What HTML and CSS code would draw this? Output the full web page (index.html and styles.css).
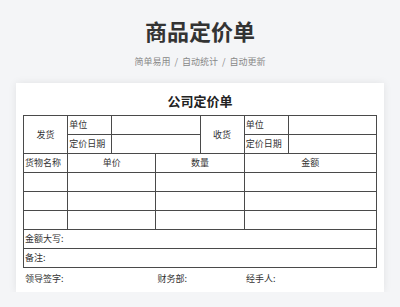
FILE: index.html
```html
<!DOCTYPE html>
<html lang="zh-CN">
<head>
    <meta charset="UTF-8">
    <meta name="viewport" content="width=device-width, initial-scale=1.0">
    <title>商品定价单</title>
    <link rel="stylesheet" href="styles.css">
</head>
<body>
    <header class="page-head">
        <h1>商品定价单</h1>
        <p class="tags">简单易用 <span class="sep">/</span> 自动统计 <span class="sep">/</span> 自动更新</p>
    </header>

    <div class="sheet">
        <h2>公司定价单</h2>
        <table class="price-table">
            <colgroup>
                <col><col><col><col><col><col><col><col>
            </colgroup>
            <tr>
                <td rowspan="2" class="center">发货</td>
                <td>单位</td>
                <td colspan="2"></td>
                <td rowspan="2" class="center">收货</td>
                <td>单位</td>
                <td colspan="2"></td>
            </tr>
            <tr>
                <td>定价日期</td>
                <td colspan="2"></td>
                <td>定价日期</td>
                <td colspan="2"></td>
            </tr>
            <tr>
                <td>货物名称</td>
                <td colspan="2" class="center">单价</td>
                <td colspan="2" class="center">数量</td>
                <td colspan="3" class="center">金额</td>
            </tr>
            <tr><td></td><td colspan="2"></td><td colspan="2"></td><td colspan="3"></td></tr>
            <tr><td></td><td colspan="2"></td><td colspan="2"></td><td colspan="3"></td></tr>
            <tr><td></td><td colspan="2"></td><td colspan="2"></td><td colspan="3"></td></tr>
            <tr><td colspan="8">金额大写:</td></tr>
            <tr><td colspan="8">备注:</td></tr>
        </table>
        <div class="signs">
            <span>领导签字:</span>
            <span>财务部:</span>
            <span>经手人:</span>
        </div>
    </div>
</body>
</html>
```

FILE: styles.css
```css
body {
    margin: 0;
    background: #f4f5f7;
    font-family: "Noto Sans CJK SC", "Noto Sans", sans-serif;
    color: #333;
}
.page-head {
    text-align: center;
    padding-top: 15px;
}
.page-head h1 {
    margin: 0;
    font-size: 22px;
    line-height: 30px;
    font-weight: bold;
    color: #333;
}
.tags {
    margin: 10px 0 0;
    font-size: 9px;
    line-height: 14px;
    color: #888;
}
.tags .sep {
    margin: 0 2px;
}
.sheet {
    margin: 14px 16px 0;
    background: #fff;
    padding: 8px 7px 6px;
    box-shadow: 0 0 8px rgba(0, 0, 0, 0.08);
}
.sheet h2 {
    margin: 0 0 4px;
    text-align: center;
    font-size: 13px;
    line-height: 20px;
    font-weight: bold;
    color: #222;
}
.price-table {
    width: 100%;
    table-layout: fixed;
    border-collapse: collapse;
    font-size: 9px;
}
.price-table col {
    width: 12.5%;
}
.price-table td {
    border: 1px solid #4a4a4a;
    height: 18px;
    padding: 0 1px;
    line-height: 12px;
    white-space: nowrap;
    overflow: hidden;
}
.price-table td.center {
    text-align: center;
}
.signs {
    display: grid;
    grid-template-columns: 132.5px 88.5px 1fr;
    padding: 4px 2px 0;
    font-size: 9px;
    line-height: 14px;
}
```
